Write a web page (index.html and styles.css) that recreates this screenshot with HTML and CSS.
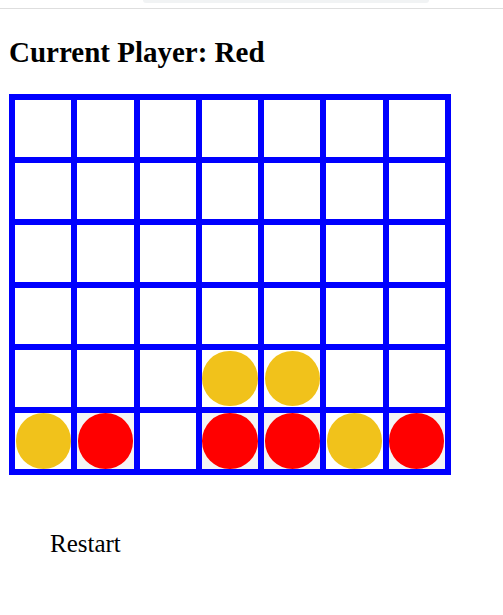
FILE: index.html
```html
<!DOCTYPE html>
<html lang="en">
<head>
  <meta charset="UTF-8">
  <meta name="viewport" content="width=device-width, initial-scale=1.0">
  <title>Connect Four</title>
  <link rel="stylesheet" href="styles.css">
</head>
<body>
  <div class="topbar"><div class="tab"></div></div>

  <main class="game">
    <h2 id="status">Current Player: Red</h2>
    <div id="board" class="board"></div>
    <button class="restart-btn" onclick="restart()">Restart</button>
  </main>

  <script>
    const ROWS = 6;
    const COLS = 7;
    const saved = [
      "       ",
      "       ",
      "       ",
      "       ",
      "   YY  ",
      "YR RRYR"
    ];
    let grid = [];
    let player = "R";

    function load() {
      grid = saved.map(row => row.split(""));
      player = "R";
      render();
    }

    function render() {
      const board = document.getElementById("board");
      board.innerHTML = "";
      for (let r = 0; r < ROWS; r++) {
        for (let c = 0; c < COLS; c++) {
          const cell = document.createElement("div");
          cell.className = "cell";
          if (grid[r][c] === "R") cell.className += " red";
          if (grid[r][c] === "Y") cell.className += " yellow";
          if (grid[r][c] !== " ") {
            const disc = document.createElement("div");
            disc.className = "disc";
            cell.appendChild(disc);
          }
          cell.onclick = () => drop(c);
          board.appendChild(cell);
        }
      }
      document.getElementById("status").innerText =
        "Current Player: " + (player === "R" ? "Red" : "Yellow");
    }

    function drop(col) {
      for (let r = ROWS - 1; r >= 0; r--) {
        if (grid[r][col] === " ") {
          grid[r][col] = player;
          player = player === "R" ? "Y" : "R";
          render();
          return;
        }
      }
    }

    function restart() {
      grid = Array.from({ length: ROWS }, () => Array(COLS).fill(" "));
      player = "R";
      render();
    }

    load();
  </script>
</body>
</html>
```

FILE: styles.css
```css
body {
  margin: 0;
  font-family: "Liberation Serif", "Times New Roman", serif;
  background: #fff;
  color: #000;
}
.topbar {
  height: 8px;
  border-bottom: 1px solid #dedede;
  display: flex;
  justify-content: center;
}
.tab {
  width: 286px;
  height: 3px;
  margin-left: 68px;
  background: #f1f3f4;
  border-radius: 0 0 8px 8px;
}
.game {
  padding: 0 9px;
}
.game h2 {
  font-size: 29px;
  margin: 27px 0 25px;
}
.board {
  width: 436px;
  height: 375px;
  border: 3px solid #00f;
  display: grid;
  grid-template-columns: repeat(7, 1fr);
  grid-template-rows: repeat(6, 1fr);
}
.cell {
  border: 3px solid #00f;
  background: #fff;
  display: flex;
  align-items: center;
  justify-content: center;
  cursor: pointer;
}
.disc {
  width: calc(100% - 1px);
  height: calc(100% - 1px);
  border-radius: 50%;
}
.cell.red { background: #f4f4f4; }
.cell.red .disc { background: #ff0000; }
.cell.yellow .disc { background: #f1c21b; }
.restart-btn {
  margin-top: 40px;
  padding: 15px 40px 15px 41px;
  background: none;
  border: none;
  font-family: inherit;
  font-size: 25px;
  color: #000;
  cursor: pointer;
}
```
